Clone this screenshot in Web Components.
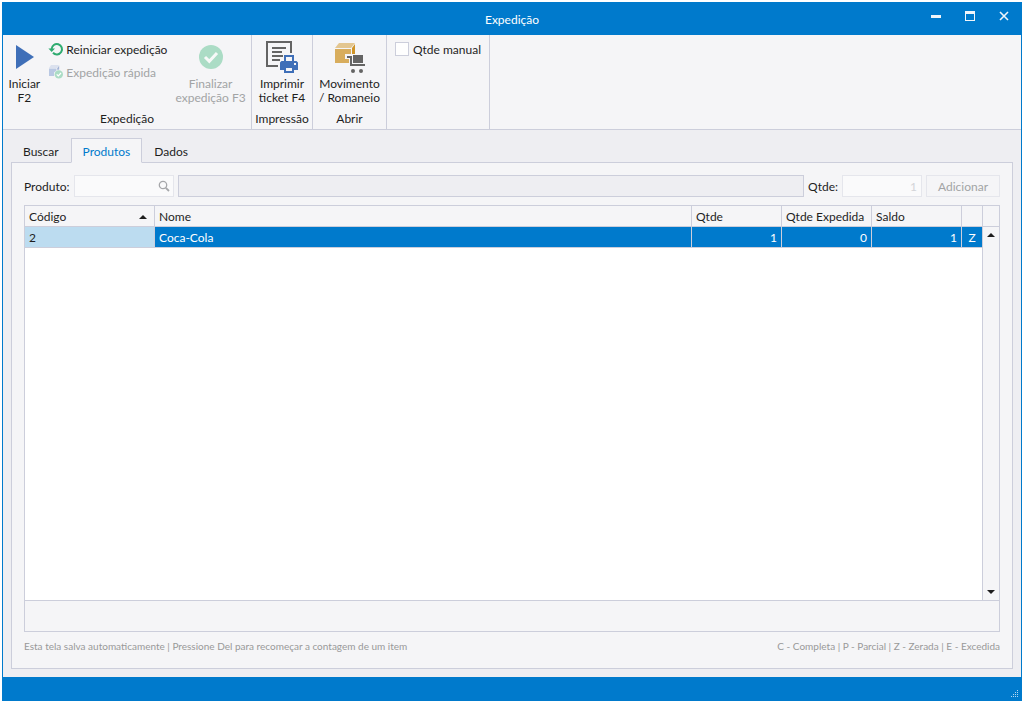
<!DOCTYPE html>
<html lang="pt-BR">
<head>
<meta charset="utf-8">
<title>Expedição</title>
<style>
  html, body {
    height: 100%;
    margin: 0;
  }

  body {
    --blue: #007acc;
    --line: #cccedb;
    --surface: #f5f5f7;
    --base: #eeeef2;
    --text: #1e1e1e;
    --muted: #a2a4a5;
    box-sizing: border-box;
    padding: 2px 0 1px 2px;
    background: #fff;
    color: var(--text);
    font: 12px/14px Lato, "Open Sans", sans-serif;
  }
</style>
</head>
<body>
<app-window>
  <title-bar slot="title">Expedição</title-bar>

  <ribbon-bar slot="ribbon">
    <ribbon-group label="Expedição" style="--group-width: 248px">
      <ribbon-button icon="play">Iniciar<br>F2</ribbon-button>
      <ribbon-stack>
        <ribbon-button small icon="restart">Reiniciar expedição</ribbon-button>
        <ribbon-button small disabled icon="fast">Expedição rápida</ribbon-button>
      </ribbon-stack>
      <ribbon-button disabled icon="finish">Finalizar<br>expedição F3</ribbon-button>
    </ribbon-group>
    <ribbon-group label="Impressão" style="--group-width: 60px">
      <ribbon-button icon="print">Imprimir<br>ticket F4</ribbon-button>
    </ribbon-group>
    <ribbon-group label="Abrir" style="--group-width: 73px">
      <ribbon-button icon="cart">Movimento<br>/ Romaneio</ribbon-button>
    </ribbon-group>
    <ribbon-group style="--group-width: 102px">
      <check-option>Qtde manual</check-option>
    </ribbon-group>
  </ribbon-bar>

  <tab-view active="1" tabs="Buscar,Produtos,Dados">
    <product-form></product-form>
    <product-grid></product-grid>
    <hint-line>
      <span>Esta tela salva automaticamente | Pressione Del para recomeçar a contagem de um item</span>
      <span>C - Completa | P - Parcial | Z - Zerada | E - Excedida</span>
    </hint-line>
  </tab-view>

  <status-bar slot="status"></status-bar>
</app-window>

<script>
const RESET = `
  * { box-sizing: border-box; }
  button, input {
    margin: 0;
    padding: 0;
    border: none;
    border-radius: 0;
    background: none;
    color: inherit;
    font: inherit;
  }
  svg { display: block; }
`;

const ICONS = {
  play: `
    <svg width="32" height="32" viewBox="0 0 32 32">
      <path d="M8 4L26 16L8 28Z" fill="#3f6fb8"/>
    </svg>`,
  restart: `
    <svg width="16" height="16" viewBox="0 0 16 16">
      <path d="M5 11.8A5.2 5.2 0 1 0 3.6 8" fill="none" stroke="#2fab70" stroke-width="2"/>
      <path d="M0.4 7.4H7L3.7 11Z" fill="#2fab70"/>
    </svg>`,
  fast: `
    <svg width="16" height="16" viewBox="0 0 16 16">
      <path d="M1 4L3 1H11L9 4Z" fill="#dbe1ee"/>
      <path d="M1 4.5H8.5V6.5L6 8.5V12H1Z" fill="#b9c8e3"/>
      <path d="M9.3 4.3L11.2 1.6V5.5L9.3 6Z" fill="#a3b4d6"/>
      <circle cx="10.8" cy="10.4" r="4.2" fill="#abdcc5"/>
      <path d="M8.7 10.4L10.3 12L13 9" fill="none" stroke="#fff" stroke-width="1.2"/>
    </svg>`,
  finish: `
    <svg width="32" height="32" viewBox="0 0 32 32">
      <circle cx="16" cy="16" r="12" fill="#abdcc5"/>
      <path d="M10 16L14.3 20.3L22 12" fill="none" stroke="#f7f9f8" stroke-width="3"/>
    </svg>`,
  print: `
    <svg width="32" height="32" viewBox="0 0 32 32">
      <path d="M12 25H1V1H25V12" fill="none" stroke="#646464" stroke-width="2"/>
      <path d="M6 7H20M6 11H16M6 15H20M6 19H16" fill="none" stroke="#646464" stroke-width="2"/>
      <path d="M17 13H30V18H32V30H29V32H17V30H14V18H17Z" fill="#f5f5f7"/>
      <path d="M18 20V14H28V20H30.5L32 21.5V29H28V32H18V29H14V21.5L15.5 20Z" fill="#3f6fb8"/>
      <path d="M20 16H26V20H20Z" fill="#f5f5f7"/>
      <path d="M20 27H26V30H20Z" fill="#f5f5f7"/>
      <path d="M28 22H30V24H28Z" fill="#f5f5f7"/>
    </svg>`,
  cart: `
    <svg width="32" height="32" viewBox="-1 0 32 32">
      <path d="M1 7L5 2H21L17 7Z" fill="#e3c690"/>
      <path d="M1 8H17V13H11V18H15V22H1Z" fill="#d8ad5d"/>
      <path d="M18 7L21 3V13H18Z" fill="#cf9428"/>
      <path d="M19 14H29V22H19Z" fill="#646464"/>
      <path d="M13 16H17V24H31" fill="none" stroke="#646464" stroke-width="2"/>
      <circle cx="19" cy="30" r="2" fill="#646464"/>
      <circle cx="27" cy="30" r="2" fill="#646464"/>
    </svg>`
};

class AppWindow extends HTMLElement {
  constructor() {
    super();
    this.attachShadow({ mode: 'open' });
    this.shadowRoot.innerHTML = `
      <style>
        ${RESET}
        :host {
          display: flex;
          flex-direction: column;
          box-sizing: border-box;
          height: 100%;
          border: solid var(--blue);
          border-width: 0 1px;
          background: var(--base);
        }
        main {
          display: flex;
          flex: 1;
          min-height: 0;
        }
      </style>
      <slot name="title"></slot>
      <slot name="ribbon"></slot>
      <main><slot></slot></main>
      <slot name="status"></slot>
    `;
  }
}

class TitleBar extends HTMLElement {
  constructor() {
    super();
    this.attachShadow({ mode: 'open' });
    this.shadowRoot.innerHTML = `
      <style>
        ${RESET}
        :host {
          display: grid;
          grid-template-columns: 1fr auto 1fr;
          height: 33px;
          background: var(--blue);
          color: #fff;
        }
        .title {
          grid-column: 2;
          align-self: center;
          padding-top: 2px;
        }
        .buttons {
          display: flex;
          justify-content: flex-end;
        }
        button {
          display: grid;
          place-items: center;
          width: 34px;
          height: 28px;
        }
      </style>
      <span class="title"><slot></slot></span>
      <div class="buttons">
        <button aria-label="Minimizar">
          <svg width="10" height="10"><path d="M0 4H10V7H0Z" fill="#f0f5fa"/></svg>
        </button>
        <button aria-label="Maximizar">
          <svg width="10" height="10"><path fill-rule="evenodd" d="M0 0H10V10H0ZM1 3V9H9V3Z" fill="#f0f5fa"/></svg>
        </button>
        <button aria-label="Fechar">
          <svg width="10" height="10"><path d="M1 1L9 9M9 1L1 9" stroke="#f0f5fa" stroke-width="1.6"/></svg>
        </button>
      </div>
    `;
  }
}

class RibbonBar extends HTMLElement {
  constructor() {
    super();
    this.attachShadow({ mode: 'open' });
    this.shadowRoot.innerHTML = `
      <style>
        :host {
          display: flex;
          border-bottom: 1px solid var(--line);
          background: var(--surface);
        }
      </style>
      <slot></slot>
    `;
  }
}

class RibbonGroup extends HTMLElement {
  constructor() {
    super();
    this.attachShadow({ mode: 'open' });
  }

  connectedCallback() {
    this.shadowRoot.innerHTML = `
      <style>
        :host {
          display: flex;
          flex-direction: column;
          gap: 7px;
          width: var(--group-width);
          padding: 6px 0 3px;
          border-right: 1px solid var(--line);
        }
        .items {
          display: flex;
          flex: 1;
          justify-content: center;
          gap: 8px;
        }
        .label {
          height: 14px;
          text-align: center;
        }
      </style>
      <div class="items"><slot></slot></div>
      <div class="label">${this.getAttribute('label') || ''}</div>
    `;
  }
}

class RibbonStack extends HTMLElement {
  constructor() {
    super();
    this.attachShadow({ mode: 'open' });
    this.shadowRoot.innerHTML = `
      <style>
        :host {
          display: flex;
          flex-direction: column;
          gap: 7px;
        }
      </style>
      <slot></slot>
    `;
  }
}

class RibbonButton extends HTMLElement {
  constructor() {
    super();
    this.attachShadow({ mode: 'open' });
  }

  connectedCallback() {
    const disabled = this.hasAttribute('disabled') ? 'disabled' : '';
    this.shadowRoot.innerHTML = `
      <style>
        ${RESET}
        :host {
          display: block;
          white-space: nowrap;
        }
        button {
          display: flex;
          flex-direction: column;
          align-items: center;
          gap: 4px;
        }
        button:disabled {
          color: var(--muted);
        }
        :host([small]) button {
          flex-direction: row;
          gap: 2px;
          height: 16px;
        }
        :host([small]) span {
          padding-top: 2px;
        }
      </style>
      <button ${disabled}>
        ${ICONS[this.getAttribute('icon')]}
        <span><slot></slot></span>
      </button>
    `;
  }
}

class CheckOption extends HTMLElement {
  constructor() {
    super();
    this.attachShadow({ mode: 'open' });
    this.shadowRoot.innerHTML = `
      <style>
        ${RESET}
        :host {
          display: block;
          white-space: nowrap;
        }
        label {
          display: flex;
          align-items: center;
          gap: 4px;
          height: 16px;
        }
        span {
          padding-top: 2px;
        }
        input {
          appearance: none;
          width: 14px;
          height: 14px;
          border: 1px solid var(--line);
          background: #fefefe;
        }
      </style>
      <label><input type="checkbox"><span><slot></slot></span></label>
    `;
  }
}

class TabView extends HTMLElement {
  constructor() {
    super();
    this.attachShadow({ mode: 'open' });
  }

  connectedCallback() {
    const active = Number(this.getAttribute('active'));
    const tabs = this.getAttribute('tabs').split(',').map((name, i) =>
      `<button role="tab" aria-selected="${i === active}">${name}</button>`
    ).join('');

    this.shadowRoot.innerHTML = `
      <style>
        ${RESET}
        :host {
          display: flex;
          flex: 1;
          flex-direction: column;
          min-width: 0;
          padding: 8px;
        }
        .tabs {
          display: flex;
          height: 25px;
          margin-bottom: -1px;
        }
        button {
          padding: 2px 12px 0;
          border: solid transparent;
          border-width: 1px 0;
        }
        button[aria-selected="true"] {
          z-index: 1;
          padding: 2px 11px 0;
          border: 1px solid var(--line);
          border-bottom-color: var(--surface);
          background: var(--surface);
          color: var(--blue);
        }
        .panel {
          display: flex;
          flex: 1;
          flex-direction: column;
          gap: 8px;
          min-height: 0;
          padding: 12px 12px 14px;
          border: 1px solid var(--line);
          background: var(--surface);
        }
      </style>
      <div class="tabs" role="tablist">${tabs}</div>
      <div class="panel" role="tabpanel"><slot></slot></div>
    `;
  }
}

class ProductForm extends HTMLElement {
  constructor() {
    super();
    this.attachShadow({ mode: 'open' });
    this.shadowRoot.innerHTML = `
      <style>
        ${RESET}
        :host {
          display: flex;
          align-items: center;
          gap: 4px;
          height: 22px;
        }
        label {
          padding-top: 2px;
        }
        input, .search, .add {
          height: 22px;
          border: 1px solid #e5e6ec;
        }
        .search {
          display: flex;
          align-items: center;
          width: 100px;
          padding-right: 3px;
          background: #fafafb;
        }
        .search input {
          flex: 1;
          min-width: 0;
          height: 20px;
          border: none;
        }
        .name {
          flex: 1;
          min-width: 0;
          border-color: var(--line);
          background: var(--base);
        }
        .qty {
          width: 80px;
          padding: 0 4px;
          background: #fafafb;
          color: #d3d4d8;
          text-align: right;
        }
        .add {
          width: 74px;
          padding-top: 2px;
          color: var(--muted);
        }
      </style>
      <label for="product">Produto:</label>
      <div class="search">
        <input id="product" type="text" disabled>
        <svg width="12" height="12" viewBox="0 0 12 12" fill="none" stroke="#a6a7aa">
          <circle cx="5" cy="5" r="3.7" stroke-width="1.3"/>
          <path d="M7.8 7.8L11 11" stroke-width="1.8"/>
        </svg>
      </div>
      <input class="name" type="text" aria-label="Nome do produto" readonly>
      <label for="qty">Qtde:</label>
      <input class="qty" id="qty" type="text" value="1" disabled>
      <button class="add" disabled>Adicionar</button>
    `;
  }
}

class ProductGrid extends HTMLElement {
  constructor() {
    super();
    this.attachShadow({ mode: 'open' });
    this.shadowRoot.innerHTML = `
      <style>
        ${RESET}
        :host {
          display: flex;
          flex: 1;
          flex-direction: column;
          min-height: 0;
          border: 1px solid var(--line);
          background: var(--surface);
        }
        .body {
          display: flex;
          flex: 1;
          min-height: 0;
        }
        .rows {
          flex: 1;
          min-width: 0;
          border-right: 1px solid var(--line);
          background: #fff;
        }
        table {
          width: 100%;
          border-spacing: 0;
          table-layout: fixed;
        }
        th, td {
          height: 21px;
          padding: 2px 4px 0;
          border: solid var(--line);
          border-width: 0 1px 1px 0;
          text-align: left;
          font-weight: normal;
          white-space: nowrap;
        }
        th {
          background: var(--surface);
        }
        td {
          background: var(--blue);
          color: #fff;
        }
        th:last-child, td:last-child {
          border-right: none;
        }
        td:first-child {
          background: #bcdcf0;
          color: var(--text);
        }
        td.num {
          text-align: right;
        }
        td.state {
          padding: 2px 0 0;
          text-align: center;
        }
        .sorted {
          display: flex;
          align-items: center;
          justify-content: space-between;
          padding-right: 3px;
        }
        .code { width: 130px; }
        .qty { width: 90px; }
        .flag { width: 20px; }
        .scroll {
          display: flex;
          flex-direction: column;
          width: 16px;
        }
        .cap {
          height: 21px;
          border-bottom: 1px solid var(--line);
        }
        .scroll button {
          display: grid;
          place-items: center;
          height: 16px;
        }
        .track {
          flex: 1;
        }
        .summary {
          height: 31px;
          border-top: 1px solid var(--line);
        }
      </style>
      <div class="body">
        <div class="rows">
          <table>
            <colgroup>
              <col class="code"><col><col class="qty"><col class="qty"><col class="qty"><col class="flag">
            </colgroup>
            <thead>
              <tr>
                <th aria-sort="ascending">
                  <div class="sorted">Código
                    <svg width="8" height="4"><path d="M4 0L8 4H0Z" fill="#1e1e1e"/></svg>
                  </div>
                </th>
                <th>Nome</th>
                <th>Qtde</th>
                <th>Qtde Expedida</th>
                <th>Saldo</th>
                <th></th>
              </tr>
            </thead>
            <tbody>
              <tr>
                <td>2</td>
                <td>Coca-Cola</td>
                <td class="num">1</td>
                <td class="num">0</td>
                <td class="num">1</td>
                <td class="state">Z</td>
              </tr>
            </tbody>
          </table>
        </div>
        <div class="scroll">
          <div class="cap"></div>
          <button aria-label="Rolar para cima">
            <svg width="8" height="4"><path d="M4 0L8 4H0Z" fill="#1e1e1e"/></svg>
          </button>
          <div class="track"></div>
          <button aria-label="Rolar para baixo">
            <svg width="8" height="4"><path d="M0 0H8L4 4Z" fill="#1e1e1e"/></svg>
          </button>
        </div>
      </div>
      <div class="summary"></div>
    `;
  }
}

class HintLine extends HTMLElement {
  constructor() {
    super();
    this.attachShadow({ mode: 'open' });
    this.shadowRoot.innerHTML = `
      <style>
        :host {
          display: flex;
          justify-content: space-between;
          padding-bottom: 2px;
          color: #999;
          font-size: 10px;
          line-height: 12px;
        }
      </style>
      <slot></slot>
    `;
  }
}

class StatusBar extends HTMLElement {
  constructor() {
    super();
    this.attachShadow({ mode: 'open' });
    this.shadowRoot.innerHTML = `
      <style>
        ${RESET}
        :host {
          display: flex;
          align-items: flex-end;
          justify-content: flex-end;
          height: 24px;
          padding: 0 2px 3px;
          box-sizing: border-box;
          background: var(--blue);
        }
      </style>
      <svg width="8" height="8" fill="#b3d7f0">
        <path d="M6 0h1v1h-1zM4 2h1v1h-1zM6 2h1v1h-1zM2 4h1v1h-1zM4 4h1v1h-1zM6 4h1v1h-1zM0 6h1v1h-1zM2 6h1v1h-1zM4 6h1v1h-1zM6 6h1v1h-1z"/>
      </svg>
    `;
  }
}

customElements.define('app-window', AppWindow);
customElements.define('title-bar', TitleBar);
customElements.define('ribbon-bar', RibbonBar);
customElements.define('ribbon-group', RibbonGroup);
customElements.define('ribbon-stack', RibbonStack);
customElements.define('ribbon-button', RibbonButton);
customElements.define('check-option', CheckOption);
customElements.define('tab-view', TabView);
customElements.define('product-form', ProductForm);
customElements.define('product-grid', ProductGrid);
customElements.define('hint-line', HintLine);
customElements.define('status-bar', StatusBar);
</script>
</body>
</html>
